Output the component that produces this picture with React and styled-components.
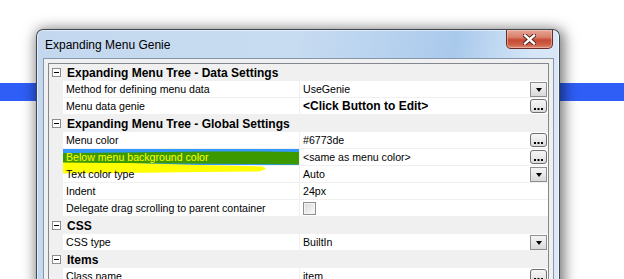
import styled, { createGlobalStyle } from "styled-components";

const GlobalStyle = createGlobalStyle`
  html, body {
    margin: 0;
    padding: 0;
    background: #fff;
  }
  body {
    width: 624px;
    height: 279px;
    overflow: hidden;
    font-family: "Liberation Sans", Arial, sans-serif;
  }
`;

const sections = [
  {
    title: "Expanding Menu Tree - Data Settings",
    rows: [
      { name: "Method for defining menu data", value: "UseGenie", control: "drop" },
      { name: "Menu data genie", value: "<Click Button to Edit>", bold: true, control: "more" },
    ],
  },
  {
    title: "Expanding Menu Tree - Global Settings",
    rows: [
      { name: "Menu color", value: "#6773de", control: "more" },
      {
        name: "Below menu background color",
        value: "<same as menu color>",
        control: "more",
        selected: true,
      },
      { name: "Text color type", value: "Auto", control: "drop" },
      { name: "Indent", value: "24px" },
      { name: "Delegate drag scrolling to parent container", check: true },
    ],
  },
  {
    title: "CSS",
    rows: [{ name: "CSS type", value: "BuiltIn", control: "drop" }],
  },
  {
    title: "Items",
    rows: [{ name: "Class name", value: "item", control: "more" }],
  },
];

const Desktop = styled.div`
  position: relative;
  width: 624px;
  height: 279px;
  overflow: hidden;
  background: #fff;
`;

const Band = styled.div`
  margin-top: 83px;
  height: 18px;
  background: #2f5ef6;
`;

const Window = styled.div`
  position: absolute;
  left: 36px;
  top: 29px;
  width: 524px;
  height: 270px;
  box-sizing: border-box;
  border: 1px solid #3f4852;
  border-bottom: none;
  border-radius: 7px 7px 0 0;
  padding: 0 5px 0 6px;
  display: flex;
  flex-direction: column;
  background: linear-gradient(
    100deg,
    #c3d7ee 0%,
    #c8dcf1 45%,
    #b3cfee 66%,
    #a9c9ec 74%,
    #d6e6f7 88%,
    #dde9f8 100%
  );
  box-shadow: inset 0 0 0 1px rgba(255, 255, 255, 0.55),
    2px 2px 14px 2px rgba(0, 0, 0, 0.55);
`;

const TitleBar = styled.div`
  flex-shrink: 0;
  height: 28px;
  display: flex;
  align-items: center;
  justify-content: space-between;
`;

const Title = styled.span`
  padding-left: 2px;
  margin-top: 1px;
  font-size: 12px;
  color: #000;
`;

const CloseButton = styled.div`
  align-self: flex-start;
  width: 47px;
  height: 19px;
  margin-right: 1px;
  box-sizing: border-box;
  border: 1px solid #6a2b22;
  border-top: none;
  border-radius: 0 0 5px 5px;
  display: flex;
  align-items: center;
  justify-content: center;
  background: linear-gradient(
    180deg,
    #e6a696 0%,
    #d9806c 40%,
    #c64b35 55%,
    #cd5e45 80%,
    #dc8a70 100%
  );
  box-shadow: inset 0 0 0 1px rgba(255, 220, 210, 0.45);
`;

const Client = styled.div`
  flex: 1;
  min-height: 0;
  overflow: hidden;
  box-sizing: border-box;
  border: 1px solid #8696ab;
  background: #f0f0f0;
  padding: 4px;
`;

const Grid = styled.div`
  border: 1px solid #828790;
  background: #fff;
`;

const CategoryRow = styled.div`
  height: 17px;
  display: flex;
  align-items: center;
  background: #f0f0f0;
  font-size: 12px;
  font-weight: bold;
  color: #000;
`;

const Toggle = styled.span`
  width: 9px;
  height: 9px;
  margin: 0 6px 0 3px;
  box-sizing: border-box;
  border: 1px solid #8c8c8c;
  background: #fff;
  display: flex;
  align-items: center;
  justify-content: center;

  &::after {
    content: "";
    width: 5px;
    height: 1px;
    background: #000;
  }
`;

const PropRow = styled.div`
  height: 16px;
  display: grid;
  grid-template-columns: 14px 236px 249px;
  border-bottom: 1px solid #f0f0f0;
  font-size: 10.6px;
  color: #000;
`;

const Gutter = styled.div`
  background: #f0f0f0;
`;

const NameCell = styled.div`
  position: ${(p) => (p.$selected ? "relative" : "static")};
  z-index: ${(p) => (p.$selected ? 1 : "auto")};
  display: flex;
  align-items: center;
  padding-left: 3px;
  white-space: nowrap;
  background: ${(p) => (p.$selected ? "#3399ff" : "#fff")};
  color: ${(p) => (p.$selected ? "#ffff00" : "#000")};
`;

const Label = styled.span`
  position: relative;
  z-index: 2;
`;

const Marker = styled.svg`
  position: absolute;
  left: 0;
  top: 0;
  overflow: visible;
  pointer-events: none;
`;

const ValueCell = styled.div`
  display: flex;
  align-items: center;
  border-left: 1px solid #f0f0f0;
  padding-left: 3px;
  padding-right: 1px;
  white-space: nowrap;
`;

const Value = styled.span`
  flex: 1;
  font-weight: ${(p) => (p.$bold ? "bold" : "normal")};
  font-size: ${(p) => (p.$bold ? "12px" : "inherit")};
`;

const DropButton = styled.div`
  width: 17px;
  height: 15px;
  box-sizing: border-box;
  border: 1px solid #8f8f8f;
  background: linear-gradient(180deg, #f4f4f4 0%, #e8e8e8 50%, #d9d9d9 100%);
  display: flex;
  align-items: center;
  justify-content: center;

  &::after {
    content: "";
    margin-top: 1px;
    border-left: 3.5px solid transparent;
    border-right: 3.5px solid transparent;
    border-top: 4px solid #000;
  }
`;

const MoreButton = styled.div`
  width: 17px;
  height: 14px;
  box-sizing: border-box;
  border: 1px solid #707070;
  border-radius: 3px;
  background: linear-gradient(180deg, #f6f6f6 0%, #ebebeb 50%, #dadada 100%);
  display: flex;
  align-items: flex-end;
  justify-content: center;
  padding-bottom: 2px;
`;

const Check = styled.span`
  width: 13px;
  height: 13px;
  box-sizing: border-box;
  border: 1px solid #8e8f8f;
  background: linear-gradient(135deg, #d8d8d8 0%, #f0f0f0 70%, #fbfbfb 100%);
  box-shadow: inset 0 0 0 1px #f4f4f4;
`;

const CloseGlyph = () => (
  <svg width="13" height="11" viewBox="0 0 13 11">
    <path d="M2 1.5 L11 9.5 M11 1.5 L2 9.5" stroke="#4a1a14" strokeWidth="4.2" strokeLinecap="square" />
    <path d="M2 1.5 L11 9.5 M11 1.5 L2 9.5" stroke="#fff" strokeWidth="2.4" strokeLinecap="square" />
  </svg>
);

const Dots = () => (
  <svg width="9" height="2" viewBox="0 0 9 2">
    <rect x="0" y="0" width="2" height="2" fill="#000" />
    <rect x="3.5" y="0" width="2" height="2" fill="#000" />
    <rect x="7" y="0" width="2" height="2" fill="#000" />
  </svg>
);

const Highlight = () => (
  <Marker width="236" height="26" viewBox="0 0 236 26">
    <path d="M0 13 L70 14 L137 16 L200 17.5 L203 20 L196 22.5 L137 23 L60 24 L0 24.5 Z" fill="#ffff00" />
    <path
      d="M0 4 L60 3.5 L140 2.5 L200 2.5 L236 3 L236 15.5 L190 15 L120 14.5 L60 14 L0 13.5 Z"
      fill="#3c9a00"
    />
  </Marker>
);

const Property = ({ row }) => (
  <PropRow>
    <Gutter />
    <NameCell $selected={row.selected}>
      {row.selected && <Highlight />}
      <Label>{row.name}</Label>
    </NameCell>
    <ValueCell>
      {row.check ? <Check /> : <Value $bold={row.bold}>{row.value}</Value>}
      {row.control === "drop" && <DropButton />}
      {row.control === "more" && (
        <MoreButton>
          <Dots />
        </MoreButton>
      )}
    </ValueCell>
  </PropRow>
);

export default function App() {
  return (
    <Desktop>
      <GlobalStyle />
      <Band />
      <Window>
        <TitleBar>
          <Title>Expanding Menu Genie</Title>
          <CloseButton>
            <CloseGlyph />
          </CloseButton>
        </TitleBar>
        <Client>
          <Grid>
            {sections.map((section) => (
              <div key={section.title}>
                <CategoryRow>
                  <Toggle />
                  {section.title}
                </CategoryRow>
                {section.rows.map((row) => (
                  <Property key={row.name} row={row} />
                ))}
              </div>
            ))}
          </Grid>
        </Client>
      </Window>
    </Desktop>
  );
}
